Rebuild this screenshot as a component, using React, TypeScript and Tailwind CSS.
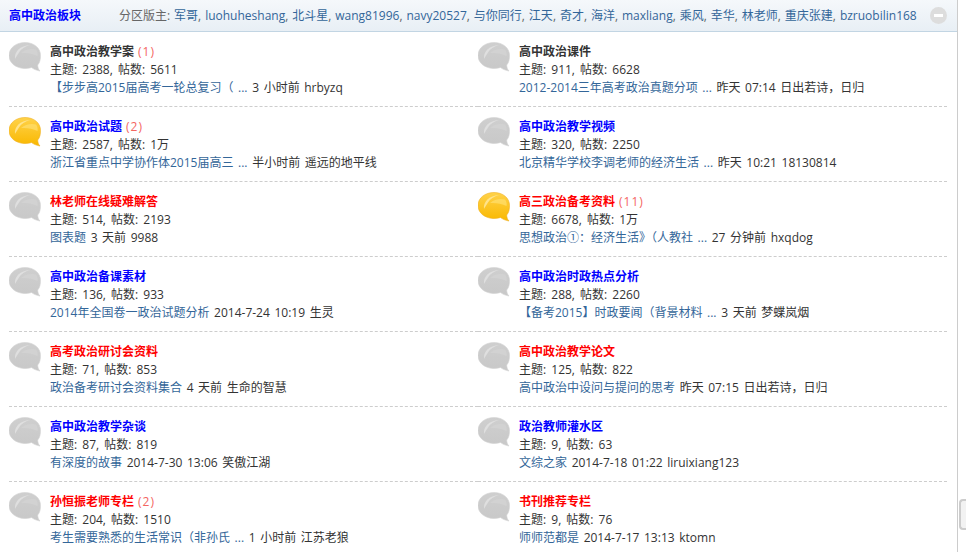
const forums = [
  { title: "高中政治教学案", color: "text-[#333333]", today: "(1)", stats: "主题: 2388, 帖数: 5611", link: "【步步高2015届高考一轮总复习（ ...", rest: " 3 小时前 hrbyzq", on: false },
  { title: "高中政治课件", color: "text-[#333333]", stats: "主题: 911, 帖数: 6628", link: "2012-2014三年高考政治真题分项 ...", rest: " 昨天 07:14 日出若诗，日归", on: false },
  { title: "高中政治试题", color: "text-[#0000ff]", today: "(2)", stats: "主题: 2587, 帖数: 1万", link: "浙江省重点中学协作体2015届高三 ...", rest: " 半小时前 遥远的地平线", on: true },
  { title: "高中政治教学视频", color: "text-[#0000ff]", stats: "主题: 320, 帖数: 2250", link: "北京精华学校李调老师的经济生活 ...", rest: " 昨天 10:21 18130814", on: false },
  { title: "林老师在线疑难解答", color: "text-[#ff0000]", stats: "主题: 514, 帖数: 2193", link: "图表题", rest: " 3 天前 9988", on: false },
  { title: "高三政治备考资料", color: "text-[#ff0000]", today: "(11)", stats: "主题: 6678, 帖数: 1万", link: "思想政治①：经济生活》（人教社 ...", rest: " 27 分钟前 hxqdog", on: true },
  { title: "高中政治备课素材", color: "text-[#0000ff]", stats: "主题: 136, 帖数: 933", link: "2014年全国卷一政治试题分析", rest: " 2014-7-24 10:19 生灵", on: false },
  { title: "高中政治时政热点分析", color: "text-[#0000ff]", stats: "主题: 288, 帖数: 2260", link: "【备考2015】时政要闻（背景材料 ...", rest: " 3 天前 梦蝶岚烟", on: false },
  { title: "高考政治研讨会资料", color: "text-[#ff0000]", stats: "主题: 71, 帖数: 853", link: "政治备考研讨会资料集合", rest: " 4 天前 生命的智慧", on: false },
  { title: "高中政治教学论文", color: "text-[#ff0000]", stats: "主题: 125, 帖数: 822", link: "高中政治中设问与提问的思考", rest: " 昨天 07:15 日出若诗，日归", on: false },
  { title: "高中政治教学杂谈", color: "text-[#0000ff]", stats: "主题: 87, 帖数: 819", link: "有深度的故事", rest: " 2014-7-30 13:06 笑傲江湖", on: false },
  { title: "政治教师灌水区", color: "text-[#0000ff]", stats: "主题: 9, 帖数: 63", link: "文综之家", rest: " 2014-7-18 01:22 liruixiang123", on: false },
  { title: "孙恒振老师专栏", color: "text-[#ff0000]", today: "(2)", stats: "主题: 204, 帖数: 1510", link: "考生需要熟悉的生活常识（非孙氏 ...", rest: " 1 小时前 江苏老狼", on: false },
  { title: "书刊推荐专栏", color: "text-[#ff0000]", stats: "主题: 9, 帖数: 76", link: "师师范都是", rest: " 2014-7-17 13:13 ktomn", on: false },
];

function Bubble({ on, id }: { on: boolean; id: string }) {
  return (
    <svg width="32" height="30" viewBox="0 0 32 30" className="shrink-0">
      <defs>
        <linearGradient id={id} x1="0" y1="0" x2="0" y2="1">
          <stop offset="0" stopColor={on ? "#ffd24a" : "#cfcfcf"} />
          <stop offset="1" stopColor={on ? "#f9b800" : "#c8c8c8"} />
        </linearGradient>
      </defs>
      <path
        d="M16 0.5C7 0.5 0 6 0 13.5S7 26 15 26.5c3 0 5.500-.3 7.500-1 2 1.500 4.500 2.800 8.500 3.500-1.500-1.500-2.200-3.500-2.300-6C31 20.500 31.500 17 31.500 13.500 31.500 6 25 .5 16 .5Z"
        fill={`url(#${id})`}
        stroke={on ? "#f0b020" : "#d4d4d4"}
        strokeWidth="0.6"
      />
      <path
        d="M6 17C5 10 11 3.500 21 3c-5 1.500-9 4-11 7.500-1.500 2.500-3 4.500-4 6.500Z"
        fill={on ? "#ffe89a" : "#e2e2e2"}
        opacity="0.85"
      />
      <path
        d="M12 11c4-3.500 10-5 15-3.500 1.500 2 2 4.500 1.500 6.500-5-2.500-11-3.500-16.500-3Z"
        fill={on ? "#ffe27a" : "#d6d6d6"}
        opacity="0.6"
      />
    </svg>
  );
}

export default function App() {
  const mods = ["军哥", "luohuheshang", "北斗星", "wang81996", "navy20527", "与你同行", "江天", "奇才", "海洋", "maxliang", "乘风", "幸华", "林老师", "重庆张建", "bzruobilin168"];

  return (
    <div className="h-[552px] overflow-hidden bg-white font-['Open_Sans','Noto_Sans_CJK_SC',sans-serif] text-xs leading-[18px] text-[#333333]">
      <div className="w-[958px] h-full border-r border-[#cccccc]">
        {/* HEADER */}
        <div className="flex items-center h-[32px] pl-[9px] pr-[10px] border-b border-[#c2d5e3] bg-gradient-to-b from-[#f5f8fb] to-[#e8eff5]">
          <a className="w-[110px] font-bold text-[#0000ff]">高中政治板块</a>
          <div className="flex-1 whitespace-nowrap text-[#666666] [word-spacing:0.8px]">
            分区版主:{" "}
            {mods.map((m, i) => (
              <span key={m}>
                <a className="text-[#336699]">{m}</a>
                {i < mods.length - 1 ? ", " : ""}
              </span>
            ))}
          </div>
          <div className="flex items-center justify-center w-[17px] h-[17px] rounded-full bg-[#dddddd]">
            <div className="w-[9px] h-[3px] bg-white" />
          </div>
        </div>

        {/* FORUM LIST */}
        <div className="grid grid-cols-[469px_469px] pl-[9px]">
          {forums.map((f, i) => (
            <div key={f.title} className="flex gap-[9px] h-[75px] pt-[10px] border-b border-dashed border-[#cdcdcd]">
              <Bubble on={f.on} id={`bubble-${i}`} />
              <div className="pt-px whitespace-nowrap">
                <div>
                  <a className={`font-bold ${f.color}`}>{f.title}</a>
                  {f.today && <span className="ml-1 tracking-[1px] text-[#f4665f]">{f.today}</span>}
                </div>
                <div className="[word-spacing:2px]">{f.stats}</div>
                <div className="whitespace-pre [word-spacing:1.5px]">
                  <a className="text-[#336699]">{f.link}</a>
                  {f.rest}
                </div>
              </div>
            </div>
          ))}
        </div>
      </div>

      {/* back to top tab */}
      <div className="fixed left-[959px] top-[499px] w-[7px] h-[31px] rounded-l-sm border-2 border-r-0 border-[#cccccc] bg-[#f2f2f2]" />
    </div>
  );
}
